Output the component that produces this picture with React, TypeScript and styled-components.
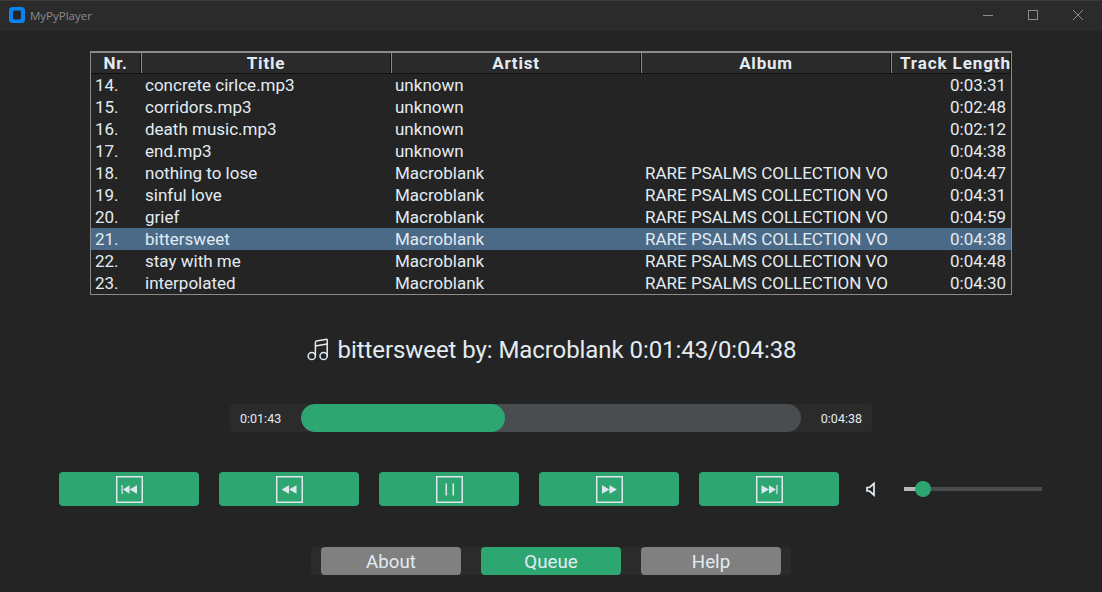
import React from 'react';
import styled, { createGlobalStyle } from 'styled-components';

const GlobalStyle = createGlobalStyle`
  html, body {
    margin: 0;
    padding: 0;
    background: #242424;
    overflow: hidden;
  }
  * {
    box-sizing: border-box;
  }
`;

const GREEN = '#2ea672';
const TEXT = '#e3ebf2';

const Window = styled.div`
  width: 1102px;
  height: 592px;
  display: flex;
  flex-direction: column;
  background: #242424;
  color: ${TEXT};
  font-family: Roboto, "Liberation Sans", sans-serif;
`;

const TitleBar = styled.div`
  height: 31px;
  flex: none;
  display: flex;
  align-items: center;
  padding: 0 2px 1px 9px;
  background: #2b2b2b;
  box-shadow: inset 0 1px 0 #3a3a3a;
`;

const AppName = styled.span`
  margin-left: 5px;
  font-family: "Open Sans", "Noto Sans", sans-serif;
  font-size: 11.5px;
  color: #8c8c8c;
`;

const WindowControls = styled.div`
  margin-left: auto;
  display: flex;
`;

const WindowButton = styled.div`
  width: 45px;
  height: 30px;
  display: flex;
  align-items: center;
  justify-content: center;
  color: #8e8e8e;
`;

const Content = styled.div`
  flex: 1;
  display: flex;
  flex-direction: column;
  align-items: flex-start;
  padding-top: 20px;
`;

const Table = styled.div`
  width: 922px;
  height: 244px;
  margin-left: 90px;
  border: 1px solid #8a8a8a;
  background: #242424;
`;

const columns = '50px 250px 250px 250px 120px';

const HeaderRow = styled.div`
  display: grid;
  grid-template-columns: ${columns};
  height: 22px;
  border-top: 1px solid #8a8a8a;
  border-bottom: 1px solid #111;
`;

const HeaderCell = styled.div`
  display: flex;
  align-items: center;
  justify-content: center;
  border-left: 1px solid #8a8a8a;
  border-right: 1px solid #111;
  font-size: 17px;
  font-weight: 700;
  letter-spacing: 0.8px;
  white-space: nowrap;
  overflow: hidden;
  background: #2a2a2a;

  &:first-child {
    border-left: none;
  }

  &:last-child {
    justify-content: flex-start;
    padding-left: 8px;
    letter-spacing: 0.9px;
  }
`;

const Row = styled.div<{ $selected?: boolean }>`
  display: grid;
  grid-template-columns: ${columns};
  height: 22px;
  align-items: center;
  font-size: 17px;
  background: ${(p) => (p.$selected ? '#4a6a88' : 'transparent')};
`;

const Cell = styled.div<{ $right?: boolean }>`
  padding: 0 ${(p) => (p.$right ? '5px' : '0')} 0 4px;
  text-align: ${(p) => (p.$right ? 'right' : 'left')};
  white-space: nowrap;
`;

const NowPlaying = styled.div`
  align-self: center;
  margin: 41px 0 0 2px;
  height: 28px;
  display: flex;
  align-items: center;
  gap: 8px;
  font-size: 24px;
  letter-spacing: -0.07px;
`;

const ProgressPanel = styled.div`
  margin: 40px 0 0 230px;
  width: 642px;
  height: 28px;
  display: grid;
  grid-template-columns: 71px 500px 71px;
  align-items: center;
  background: #2b2b2b;
  border-radius: 4px;
  font-size: 12.5px;
`;

const TimeLabel = styled.span<{ $end?: boolean }>`
  text-align: ${(p) => (p.$end ? 'right' : 'left')};
  padding: ${(p) => (p.$end ? '0 10px 0 0' : '0 0 0 10px')};
`;

const ProgressTrack = styled.div`
  height: 28px;
  border-radius: 14px;
  background: #4a4d50;
  overflow: hidden;
`;

const ProgressFill = styled.div`
  height: 100%;
  border-radius: 14px;
  background: ${GREEN};
`;

const Controls = styled.div`
  margin: 40px 0 0 59px;
  display: flex;
  align-items: center;
`;

const TransportButton = styled.div`
  width: 140px;
  height: 34px;
  margin-right: 20px;
  display: flex;
  align-items: center;
  justify-content: center;
  border-radius: 4px;
  background: ${GREEN};
`;

const VolumeIcon = styled.div`
  width: 12px;
  height: 16px;
  margin-left: 6px;
  display: flex;
`;

const VolumeSlider = styled.div`
  position: relative;
  width: 138px;
  height: 4px;
  margin-left: 27px;
  background: #4a4d50;
`;

const VolumeLevel = styled.div`
  height: 100%;
  background: #b4b8bd;
`;

const VolumeHandle = styled.div`
  position: absolute;
  top: -6px;
  width: 16px;
  height: 16px;
  border-radius: 50%;
  background: ${GREEN};
`;

const TabBar = styled.div`
  margin: 41px 0 0 311px;
  width: 480px;
  height: 28px;
  padding: 0 10px;
  display: flex;
  gap: 20px;
  background: #2b2b2b;
  border-radius: 4px;
`;

const TabButton = styled.div<{ $active?: boolean }>`
  width: 140px;
  height: 28px;
  padding-top: 1px;
  display: flex;
  align-items: center;
  justify-content: center;
  font-size: 18.7px;
  border-radius: 4px;
  background: ${(p) => (p.$active ? GREEN : '#808080')};
`;

const ALBUM = 'RARE PSALMS COLLECTION VO';

const tracks = [
  ['14.', 'concrete cirlce.mp3', 'unknown', '', '0:03:31'],
  ['15.', 'corridors.mp3', 'unknown', '', '0:02:48'],
  ['16.', 'death music.mp3', 'unknown', '', '0:02:12'],
  ['17.', 'end.mp3', 'unknown', '', '0:04:38'],
  ['18.', 'nothing to lose', 'Macroblank', ALBUM, '0:04:47'],
  ['19.', 'sinful love', 'Macroblank', ALBUM, '0:04:31'],
  ['20.', 'grief', 'Macroblank', ALBUM, '0:04:59'],
  ['21.', 'bittersweet', 'Macroblank', ALBUM, '0:04:38'],
  ['22.', 'stay with me', 'Macroblank', ALBUM, '0:04:48'],
  ['23.', 'interpolated', 'Macroblank', ALBUM, '0:04:30'],
];

const glyphs: Record<string, React.ReactNode> = {
  first: (
    <>
      <rect x="5.5" y="9" width="1.2" height="9" />
      <path d="M7 13.5 L13.5 9.3 V17.7 Z M13.5 13.5 L21 9.3 V17.7 Z" />
    </>
  ),
  back: <path d="M5.5 13.5 L13 9.3 V17.7 Z M13 13.5 L20.5 9.3 V17.7 Z" />,
  pause: (
    <>
      <rect x="9.5" y="7.5" width="1.5" height="12" />
      <rect x="16.5" y="7.5" width="1.5" height="12" />
    </>
  ),
  forward: <path d="M6 9.3 L13.5 13.5 L6 17.7 Z M13.5 9.3 L21 13.5 L13.5 17.7 Z" />,
  last: (
    <>
      <path d="M5.5 9.3 L13 13.5 L5.5 17.7 Z M13 9.3 L20 13.5 L13 17.7 Z" />
      <rect x="20.3" y="9" width="1.2" height="9" />
    </>
  ),
};

const MediaIcon = ({ name }: { name: string }) => (
  <svg width="27" height="27" viewBox="0 0 27 27" fill="#dfe8ee">
    <rect x="0.75" y="0.75" width="25.5" height="25.5" fill="none" stroke="#dfe8ee" strokeWidth="1.5" />
    {glyphs[name]}
  </svg>
);

const App: React.FC = () => {
  return (
    <Window>
      <GlobalStyle />
      <TitleBar>
        <svg width="16" height="16" viewBox="0 0 16 16">
          <rect width="16" height="16" rx="3.5" fill="#0a84f0" />
          <rect x="4" y="3.5" width="8" height="9" rx="1.5" fill="#22262b" />
        </svg>
        <AppName>MyPyPlayer</AppName>
        <WindowControls>
          <WindowButton>
            <svg width="10" height="10" viewBox="0 0 10 10" stroke="currentColor" fill="none">
              <path d="M0 5.5H10" />
            </svg>
          </WindowButton>
          <WindowButton>
            <svg width="10" height="10" viewBox="0 0 10 10" stroke="currentColor" fill="none">
              <rect x="0.5" y="0.5" width="9" height="9" />
            </svg>
          </WindowButton>
          <WindowButton>
            <svg width="10" height="10" viewBox="0 0 10 10" stroke="currentColor" fill="none">
              <path d="M0 0L10 10M10 0L0 10" />
            </svg>
          </WindowButton>
        </WindowControls>
      </TitleBar>

      <Content>
        <Table>
          <HeaderRow>
            <HeaderCell>Nr.</HeaderCell>
            <HeaderCell>Title</HeaderCell>
            <HeaderCell>Artist</HeaderCell>
            <HeaderCell>Album</HeaderCell>
            <HeaderCell>Track Length</HeaderCell>
          </HeaderRow>
          {tracks.map((t) => (
            <Row key={t[0]} $selected={t[0] === '21.'}>
              <Cell>{t[0]}</Cell>
              <Cell>{t[1]}</Cell>
              <Cell>{t[2]}</Cell>
              <Cell>{t[3]}</Cell>
              <Cell $right>{t[4]}</Cell>
            </Row>
          ))}
        </Table>

        <NowPlaying>
          <svg width="22" height="24" viewBox="0 0 22 24" fill="none" stroke="#e3ebf2" strokeWidth="1.5" strokeLinejoin="round">
            <circle cx="4.8" cy="18" r="3.6" />
            <circle cx="16.6" cy="18" r="3.6" />
            <path d="M8.4 18V4.2Q8.4 3.2 9.4 3L19.8 1.2Q20.2 1.2 20.2 2V18" />
            <path d="M8.4 8L20.2 6" />
          </svg>
          bittersweet by: Macroblank 0:01:43/0:04:38
        </NowPlaying>

        <ProgressPanel>
          <TimeLabel>0:01:43</TimeLabel>
          <ProgressTrack>
            <ProgressFill style={{ width: `${(103 / 278) * 100 + 3.7}%` }} />
          </ProgressTrack>
          <TimeLabel $end>0:04:38</TimeLabel>
        </ProgressPanel>

        <Controls>
          {['first', 'back', 'pause', 'forward', 'last'].map((name) => (
            <TransportButton key={name}>
              <MediaIcon name={name} />
            </TransportButton>
          ))}
          <VolumeIcon>
            <svg width="12" height="16" viewBox="0 0 12 16" fill="none" stroke="#e3ebf2" strokeWidth="1.7">
              <path d="M2 6.5V10H4.5L9 14V2.5L4.5 6.5Z" />
            </svg>
          </VolumeIcon>
          <VolumeSlider>
            <VolumeLevel style={{ width: '14%' }} />
            <VolumeHandle style={{ left: 11 }} />
          </VolumeSlider>
        </Controls>

        <TabBar>
          <TabButton>About</TabButton>
          <TabButton $active>Queue</TabButton>
          <TabButton>Help</TabButton>
        </TabBar>
      </Content>
    </Window>
  );
};

export default App;
